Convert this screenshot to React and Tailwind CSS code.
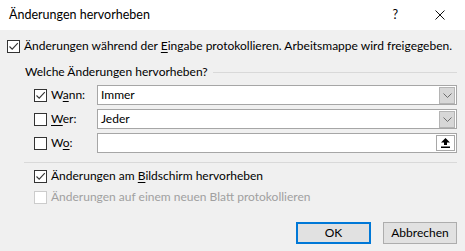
const font = { fontFamily: 'Lato, "Noto Sans", sans-serif' };

function Check({ checked, disabled }) {
  return (
    <span
      className={`flex h-[13px] w-[13px] shrink-0 items-center justify-center border bg-white ${
        disabled ? "border-[#cccccc]" : "border-[#333333]"
      }`}
    >
      {checked && (
        <svg width="11" height="11" viewBox="0 0 11 11" fill="none">
          <path d="M1.5 5.5 L4.2 8.2 L9.8 2.2" stroke="#333" strokeWidth="1.1" />
        </svg>
      )}
    </span>
  );
}

function DropButton() {
  return (
    <div className="ml-auto mr-px flex h-[17px] w-[16px] items-center justify-center border border-[#b4b4b4] bg-[#d7d7d7]">
      <svg width="9" height="5" viewBox="0 0 9 5" fill="none">
        <path d="M0.5 0.5 L4.5 4.5 L8.5 0.5" stroke="#6d6d6d" strokeWidth="1" />
      </svg>
    </div>
  );
}

function PickButton() {
  return (
    <div className="ml-auto mr-px flex h-[16px] w-[19px] items-center justify-center border border-[#a8a8a8] bg-white">
      <svg width="9" height="10" viewBox="0 0 9 10">
        <path d="M4.5 0 L9 4.5 L6 4.5 L6 7 L3 7 L3 4.5 L0 4.5 Z" fill="#000" />
        <rect x="0" y="8.5" width="9" height="1.5" fill="#000" />
      </svg>
    </div>
  );
}

function FieldRow({ label, hot, rest, checked, value, button }) {
  return (
    <div className="flex h-[20px] items-center">
      <div className="ml-[34px] flex w-[63px] items-center">
        <Check checked={checked} />
        <span className="ml-[4px]">
          {label}
          <span className="underline underline-offset-2">{hot}</span>
          {rest}
        </span>
      </div>
      <div className="flex h-[20px] w-[360px] items-center border border-[#a6a6a6] bg-white">
        <span className="ml-[3px]">{value}</span>
        {button}
      </div>
    </div>
  );
}

export default function App() {
  return (
    <div
      className="flex h-[251px] w-[465px] flex-col overflow-hidden whitespace-nowrap bg-[#f0f0f0] text-[12px] text-black"
      style={font}
    >
      <div className="flex h-[30px] shrink-0 items-center bg-white">
        <span className="ml-[9px] text-[12.5px]">Änderungen hervorheben</span>
        <span className="ml-auto text-[12.5px]">?</span>
        <svg className="ml-[37px] mr-[20px]" width="10" height="10" viewBox="0 0 10 10">
          <path d="M0.5 0.5 L9.5 9.5 M9.5 0.5 L0.5 9.5" stroke="#111" strokeWidth="1" />
        </svg>
      </div>

      <div className="mt-[8px] flex h-[16px] items-center pl-[7px]">
        <Check checked />
        <span className="ml-[4px]">
          Änderungen während der <span className="underline underline-offset-2">E</span>ingabe
          protokollieren. Arbeitsmappe wird freigegeben.
        </span>
      </div>

      <div className="mt-[10px] flex h-[16px] items-center pl-[25px] pr-[8px]">
        <span>Welche Änderungen hervorheben?</span>
        <div className="ml-[5px] h-px flex-1 bg-[#d9d9d9]" />
      </div>

      <div className="mt-[5px] flex flex-col gap-[4px]">
        <FieldRow label="W" hot="a" rest="nn:" checked value="Immer" button={<DropButton />} />
        <FieldRow label="" hot="W" rest="er:" value="Jeder" button={<DropButton />} />
        <FieldRow label="W" hot="o" rest=":" value="" button={<PickButton />} />
      </div>

      <div className="ml-[24px] mr-[8px] mt-[9px] h-px bg-[#d9d9d9]" />

      <div className="ml-[34px] mt-[5px] flex h-[16px] items-center">
        <Check checked />
        <span className="ml-[4px]">
          Änderungen am <span className="underline underline-offset-2">B</span>ildschirm hervorheben
        </span>
      </div>
      <div className="ml-[34px] mt-[5px] flex h-[16px] items-center">
        <Check disabled />
        <span className="ml-[4px] text-[#a0a0a0]">Änderungen auf einem neuen Blatt protokollieren</span>
      </div>

      <div className="mr-[8px] mt-[17px] flex justify-end gap-[12px]">
        <button className="h-[22px] w-[75px] border-2 border-[#0078d7] bg-[#e1e1e1]">OK</button>
        <button className="h-[22px] w-[74px] border border-[#adadad] bg-[#e1e1e1]">Abbrechen</button>
      </div>
    </div>
  );
}
